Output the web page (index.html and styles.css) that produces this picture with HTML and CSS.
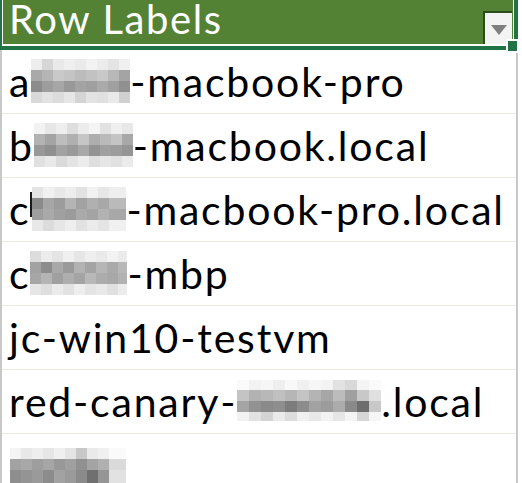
FILE: index.html
```html
<!DOCTYPE html>
<html lang="en">

<head>
    <meta charset="UTF-8">
    <meta name="viewport" content="width=device-width, initial-scale=1.0">
    <title>Pivot Table - Row Labels</title>
    <link rel="stylesheet" href="styles.css">
</head>

<body>

    <div class="sheet">

        <!-- selected header cell -->
        <div class="header-cell">
            <div class="header-fill">
                <span class="header-text">Row Labels</span>
                <span class="filter-btn"><span class="filter-arrow"></span></span>
            </div>
            <span class="fill-handle"></span>
        </div>

        <!-- host names (redacted parts are pixelated) -->
        <div class="rows">
            <div class="row">a<span class="blur blur-a"></span>-macbook-pro</div>
            <div class="row">b<span class="blur blur-b"></span>-macbook.local</div>
            <div class="row">c<span class="blur blur-c"></span>-macbook-pro.local</div>
            <div class="row">c<span class="blur blur-d"></span>-mbp</div>
            <div class="row">jc-win10-testvm</div>
            <div class="row">red-canary-<span class="blur blur-f"></span>.local</div>
            <div class="row row-last"><span class="blur blur-g"></span></div>
        </div>

    </div>

</body>

</html>
```

FILE: styles.css
```css
body {
    margin: 0;
    padding: 0;
    background-color: #fff;
    font-family: 'Lato', 'Open Sans', sans-serif;
    color: #000;
    overflow: hidden;
}

.sheet {
    width: 514px;
    height: 483px;
    border-left: 2px solid #c8c8c8;
    border-right: 2px solid #c8c8c8;
}

/* header cell with the green selection frame */
.header-cell {
    position: relative;
    margin: 0 -2px;
    border-left: 2px solid #217346;
    border-right: 4px solid #217346;
    border-bottom: 4px solid #217346;
}

.header-fill {
    display: flex;
    justify-content: space-between;
    align-items: flex-end;
    height: 44px;
    padding-left: 6px;
    background-color: #548235;
    border-left: 1px solid #fff;
    border-right: 1px solid #fff;
    border-bottom: 2px solid #fff;
}

.header-text {
    align-self: flex-start;
    font-size: 40px;
    line-height: 38px;
    letter-spacing: 1.6px;
    color: #fff;
}

.filter-btn {
    display: flex;
    align-items: center;
    justify-content: center;
    width: 27px;
    height: 31px;
    margin-right: 1px;
    background-color: #f3f3f3;
    border-top: 2px solid #2b4d1c;
    border-left: 2px solid #2b4d1c;
}

.filter-arrow {
    width: 0;
    height: 0;
    margin-top: 2px;
    border-left: 8px solid transparent;
    border-right: 8px solid transparent;
    border-top: 10px solid #7f7f7f;
}

.fill-handle {
    position: absolute;
    right: -3px;
    bottom: -5px;
    width: 9px;
    height: 10px;
    background-color: #217346;
    box-shadow: 0 0 0 2px #fff;
}

/* body rows */
.rows {
    height: 433px;
    overflow: hidden;
}

.row {
    height: 63px;
    padding-left: 7px;
    border-bottom: 1px solid #e2efda;
    font-size: 41px;
    line-height: 63px;
    letter-spacing: 1.8px;
    white-space: nowrap;
}

.row-last {
    border-bottom: none;
}

/* pixelated redactions: one gradient per mosaic row */
.blur {
    display: inline-block;
    height: 44px;
    vertical-align: -6px;
    background-repeat: no-repeat;
    background-size: 100% 11px;
    background-position: 0 0, 0 11px, 0 22px, 0 33px;
}

.blur-a {
    width: 99px;
    background-image:
        linear-gradient(90deg, #ededed 0 11px, #d6d6d6 11px 22px, #e9e9e9 22px 33px, #efefef 33px 44px, #eaeaea 44px 55px, #f2f2f2 55px 66px, #ececec 66px 77px, #e4e4e4 77px 88px, #f0f0f0 88px),
        linear-gradient(90deg, #a9a9a9 0 11px, #b5b5b5 11px 22px, #c9c9c9 22px 33px, #c4c4c4 33px 44px, #bcbcbc 44px 55px, #c2c2c2 55px 66px, #c8c8c8 66px 77px, #b8b8b8 77px 88px, #a4a4a4 88px),
        linear-gradient(90deg, #8c8c8c 0 11px, #9d9d9d 11px 22px, #a6a6a6 22px 33px, #989898 33px 44px, #a3a3a3 44px 55px, #9f9f9f 55px 66px, #aaaaaa 66px 77px, #a0a0a0 77px 88px, #909090 88px),
        linear-gradient(90deg, #d9d9d9 0 11px, #e2e2e2 11px 22px, #dcdcdc 22px 33px, #e6e6e6 33px 44px, #d4d4d4 44px 55px, #e3e3e3 55px 66px, #e0e0e0 66px 77px, #e9e9e9 77px 88px, #d0d0d0 88px);
}

.blur-b {
    width: 99px;
    background-image:
        linear-gradient(90deg, #f2f2f2 0 11px, #e6e6e6 11px 22px, #eeeeee 22px 33px, #dedede 33px 44px, #ececec 44px 55px, #f4f4f4 55px 66px, #e2e2e2 66px 77px, #efefef 77px 88px, #e8e8e8 88px),
        linear-gradient(90deg, #b2b2b2 0 11px, #a4a4a4 11px 22px, #bdbdbd 22px 33px, #b0b0b0 33px 44px, #c6c6c6 44px 55px, #aeaeae 55px 66px, #bababa 66px 77px, #c4c4c4 77px 88px, #a8a8a8 88px),
        linear-gradient(90deg, #989898 0 11px, #8f8f8f 11px 22px, #a2a2a2 22px 33px, #9a9a9a 33px 44px, #a8a8a8 44px 55px, #939393 55px 66px, #a0a0a0 66px 77px, #9c9c9c 77px 88px, #959595 88px),
        linear-gradient(90deg, #e0e0e0 0 11px, #e9e9e9 11px 22px, #dadada 22px 33px, #e4e4e4 33px 44px, #ececec 44px 55px, #dedede 55px 66px, #e6e6e6 66px 77px, #e1e1e1 77px 88px, #ebebeb 88px);
}

.blur-c {
    width: 96px;
    background-image:
        linear-gradient(#1a1a1a, #1a1a1a),
        linear-gradient(90deg, #e4e4e4 0 11px, #f0f0f0 11px 22px, #e8e8e8 22px 33px, #ededed 33px 44px, #e2e2e2 44px 55px, #f1f1f1 55px 66px, #e7e7e7 66px 77px, #eeeeee 77px),
        linear-gradient(90deg, #8a8a8a 0 11px, #a6a6a6 11px 22px, #9c9c9c 22px 33px, #b4b4b4 33px 44px, #a2a2a2 44px 55px, #b0b0b0 55px 66px, #a8a8a8 66px 77px, #bababa 77px),
        linear-gradient(90deg, #9e9e9e 0 11px, #a9a9a9 11px 22px, #a0a0a0 22px 33px, #9b9b9b 33px 44px, #aaaaaa 44px 55px, #a4a4a4 55px 66px, #b2b2b2 66px 77px, #a8a8a8 77px),
        linear-gradient(90deg, #e8e8e8 0 11px, #dcdcdc 11px 22px, #e6e6e6 22px 33px, #eeeeee 33px 44px, #e2e2e2 44px 55px, #ebebeb 55px 66px, #e4e4e4 66px 77px, #f0f0f0 77px);
    background-size: 2px 25px, 100% 11px, 100% 11px, 100% 11px, 100% 11px;
    background-position: 0 5px, 2px 0, 2px 11px, 2px 22px, 2px 33px;
}

.blur-d {
    width: 97px;
    background-image:
        linear-gradient(90deg, #dcdcdc 0 11px, #ececec 11px 22px, #e4e4e4 22px 33px, #f0f0f0 33px 44px, #e6e6e6 44px 55px, #eeeeee 55px 66px, #e9e9e9 66px 77px, #f2f2f2 77px 88px, #ebebeb 88px),
        linear-gradient(90deg, #a2a2a2 0 11px, #8c8c8c 11px 22px, #a8a8a8 22px 33px, #9a9a9a 33px 44px, #b2b2b2 44px 55px, #a4a4a4 55px 66px, #b6b6b6 66px 77px, #aaaaaa 77px 88px, #b8b8b8 88px),
        linear-gradient(90deg, #a6a6a6 0 11px, #b4b4b4 11px 22px, #a0a0a0 22px 33px, #aeaeae 33px 44px, #a4a4a4 44px 55px, #b8b8b8 55px 66px, #acacac 66px 77px, #a8a8a8 77px 88px, #b2b2b2 88px),
        linear-gradient(90deg, #e6e6e6 0 11px, #dedede 11px 22px, #ebebeb 22px 33px, #e2e2e2 33px 44px, #eeeeee 44px 55px, #e4e4e4 55px 66px, #e9e9e9 66px 77px, #e0e0e0 77px 88px, #ececec 88px);
}

.blur-f {
    width: 144px;
    height: 41px;
    vertical-align: -4px;
    background-size: 100% 10px, 100% 11px, 100% 11px, 100% 9px;
    background-position: 0 0, 0 10px, 0 21px, 0 32px;
    background-image:
        linear-gradient(90deg, #fafafa 0 12px, #f2f2f2 12px 24px, #f6f6f6 24px 36px, #eeeeee 36px 48px, #f8f8f8 48px 60px, #f0f0f0 60px 72px, #f6f6f6 72px 84px, #f3f3f3 84px 96px, #e2e2e2 96px 108px, #d8d8d8 108px 120px, #f4f4f4 120px 132px, #fafafa 132px),
        linear-gradient(90deg, #c4c4c4 0 12px, #b2b2b2 12px 24px, #b8b8b8 24px 36px, #c0c0c0 36px 48px, #b6b6b6 48px 60px, #c4c4c4 60px 72px, #b4b4b4 72px 84px, #a6a6a6 84px 96px, #bcbcbc 96px 108px, #a0a0a0 108px 120px, #c8c8c8 120px 132px, #e0e0e0 132px),
        linear-gradient(90deg, #a4a4a4 0 12px, #929292 12px 24px, #8a8a8a 24px 36px, #8e8e8e 36px 48px, #7c7c7c 48px 60px, #8c8c8c 60px 72px, #a2a2a2 72px 84px, #9c9c9c 84px 96px, #acacac 96px 108px, #8a8a8a 108px 120px, #6e6e6e 120px 132px, #c8c8c8 132px),
        linear-gradient(90deg, #f2f2f2 0 12px, #e2e2e2 12px 24px, #d4d4d4 24px 36px, #eaeaea 36px 48px, #dcdcdc 48px 60px, #f0f0f0 60px 72px, #e8e8e8 72px 84px, #f2f2f2 84px 96px, #e6e6e6 96px 108px, #f4f4f4 108px 120px, #d6d6d6 120px 132px, #f6f6f6 132px);
}

.blur-g {
    display: block;
    width: 116px;
    height: 35px;
    margin: 14px 0 0 1px;
    background-position: 0 0, 0 11px, 0 22px;
    background-size: 100% 11px, 100% 11px, 100% 13px;
    background-image:
        linear-gradient(90deg, #f4f4f4 0 11px, #e8e8e8 11px 22px, #eeeeee 22px 33px, #e6e6e6 33px 44px, #efefef 44px 55px, #e4e4e4 55px 66px, #c8c8c8 66px 77px, #eaeaea 77px 88px, #f0f0f0 88px 99px, #fafafa 99px),
        linear-gradient(90deg, #a2a2a2 0 11px, #a8a8a8 11px 22px, #9e9e9e 22px 33px, #a6a6a6 33px 44px, #989898 44px 55px, #a0a0a0 55px 66px, #909090 66px 77px, #a4a4a4 77px 88px, #b0b0b0 88px 99px, #dadada 99px),
        linear-gradient(90deg, #8e8e8e 0 11px, #949494 11px 22px, #9a9a9a 22px 33px, #8c8c8c 33px 44px, #a2a2a2 44px 55px, #9a9a9a 55px 66px, #8a8a8a 66px 77px, #707070 77px 88px, #969696 88px 99px, #e2e2e2 99px);
}
```
